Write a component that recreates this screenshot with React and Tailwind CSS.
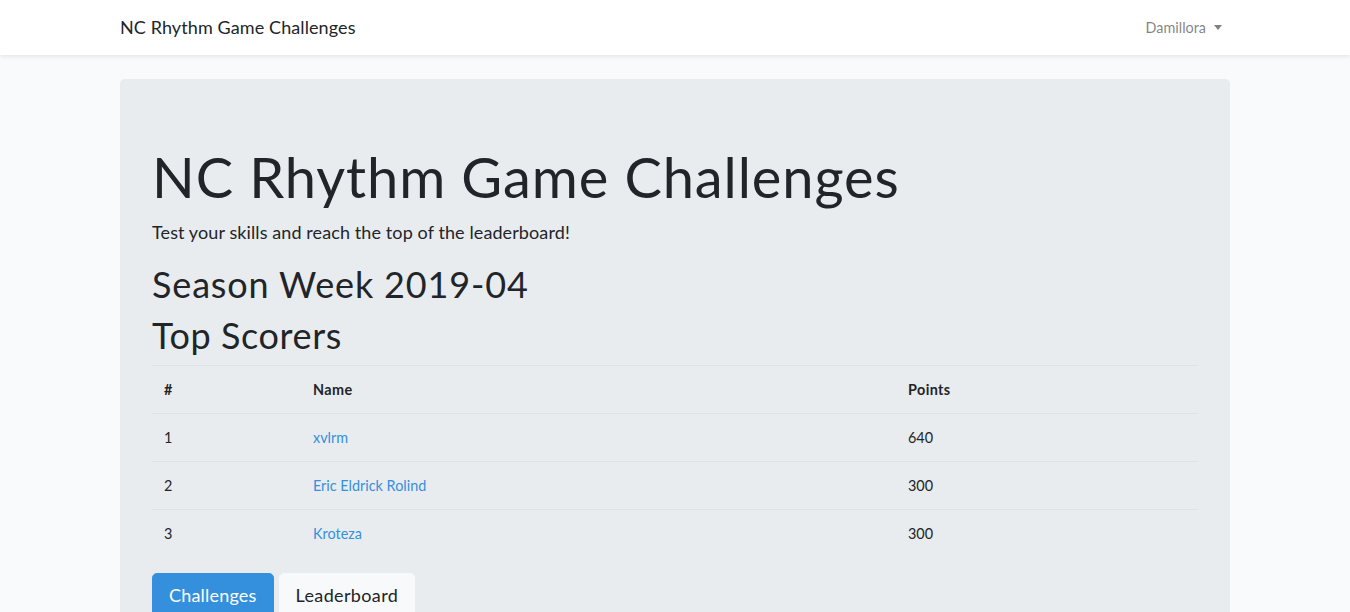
import React from "react";

const scorers = [
    { rank: 1, name: "xvlrm", points: 640 },
    { rank: 2, name: "Eric Eldrick Rolind", points: 300 },
    { rank: 3, name: "Kroteza", points: 300 },
];

const App = () => {
    return (
        <div className="min-h-screen bg-[#f8fafc] text-[#212529] font-['Lato','Noto_Sans',sans-serif] text-[14.4px] leading-[1.6]">
            {/* Navbar */}
            <nav className="bg-white shadow-[0_2px_4px_rgba(0,0,0,0.075)] py-2">
                <div className="max-w-[1140px] mx-auto px-[15px] flex items-center justify-between">
                    <a href="#" className="text-[18px] py-[5px] text-[#212529] tracking-[0.1px]">
                        NC Rhythm Game Challenges
                    </a>
                    <a href="#" className="flex items-center px-2 text-black/50">
                        Damillora
                        <span className="ml-[8px] inline-block w-0 h-0 border-x-[4px] border-x-transparent border-t-[5px] border-t-black/50" />
                    </a>
                </div>
            </nav>

            <main className="py-6">
                <div className="max-w-[1140px] mx-auto px-[15px]">
                    <div className="bg-[#e9ecef] rounded-[4.8px] px-8 pt-16 pb-16">
                        <h1 className="text-[56px] font-normal leading-[1.2] mb-2 tracking-[0.9px]">
                            NC Rhythm Game Challenges
                        </h1>
                        <p className="text-[18px] font-normal mb-4 tracking-[0.1px]">
                            Test your skills and reach the top of the leaderboard!
                        </p>
                        <h1 className="text-[36px] font-normal leading-[1.2] mb-2 tracking-[0.85px]">
                            Season Week 2019-04
                        </h1>
                        <h1 className="text-[36px] font-normal leading-[1.2] mb-2 tracking-[0.6px]">
                            Top Scorers
                        </h1>

                        <table className="w-full mb-4 border-collapse">
                            <thead>
                                <tr className="border-t border-[#dee2e6]">
                                    <th className="w-[149px] text-left font-bold p-3 border-b border-[#dee2e6]">#</th>
                                    <th className="w-[595px] text-left font-bold p-3 border-b border-[#dee2e6] tracking-[0.4px]">Name</th>
                                    <th className="text-left font-bold p-3 border-b border-[#dee2e6] tracking-[0.4px]">Points</th>
                                </tr>
                            </thead>
                            <tbody>
                                {scorers.map((s) => (
                                    <tr key={s.rank} className="border-t border-[#dee2e6]">
                                        <td className="p-3">{s.rank}</td>
                                        <td className="p-3">
                                            <a href="#" className="text-[#3490dc]">{s.name}</a>
                                        </td>
                                        <td className="p-3">{s.points}</td>
                                    </tr>
                                ))}
                            </tbody>
                        </table>

                        <div className="flex gap-[5px]">
                            <a href="#" className="bg-[#3490dc] text-white text-[18px] leading-[1.5] px-4 py-2 rounded-[4.8px] border border-[#3490dc] tracking-[0.2px]">
                                Challenges
                            </a>
                            <a href="#" className="bg-[#f8f9fa] text-[#212529] text-[18px] leading-[1.5] px-4 py-2 rounded-[4.8px] border border-[#f8f9fa] tracking-[0.35px]">
                                Leaderboard
                            </a>
                        </div>
                    </div>
                </div>
            </main>
        </div>
    );
};

export default App;
